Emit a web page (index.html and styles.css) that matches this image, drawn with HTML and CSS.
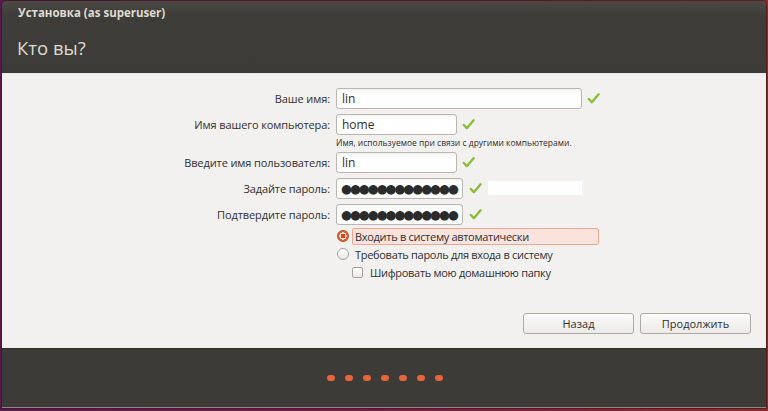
FILE: index.html
```html
<!DOCTYPE html>
<html lang="ru">
<head>
<meta charset="utf-8">
<title>Установка</title>
<link rel="stylesheet" href="styles.css">
</head>
<body>
<div class="window">
  <header class="header">
    <div class="wtitle">Установка (as superuser)</div>
    <h1 class="page-title">Кто вы?</h1>
  </header>
  <main class="content">
    <div class="form">
      <label class="lbl">Ваше имя:</label>
      <div class="field"><div class="input w-long">lin</div><span class="check"><svg viewBox="0 0 14 14" width="13" height="13"><path d="M2 7.5 L5.2 11 L12.5 2.5" fill="none" stroke="#8bbd3a" stroke-width="2.6" stroke-linecap="round" stroke-linejoin="round"/></svg></span></div>

      <label class="lbl">Имя вашего компьютера:</label>
      <div class="field"><div class="input w-short">home</div><span class="check"><svg viewBox="0 0 14 14" width="13" height="13"><path d="M2 7.5 L5.2 11 L12.5 2.5" fill="none" stroke="#8bbd3a" stroke-width="2.6" stroke-linecap="round" stroke-linejoin="round"/></svg></span></div>
      <div></div>
      <div class="hint">Имя, используемое при связи с другими компьютерами.</div>

      <label class="lbl">Введите имя пользователя:</label>
      <div class="field"><div class="input w-short">lin</div><span class="check"><svg viewBox="0 0 14 14" width="13" height="13"><path d="M2 7.5 L5.2 11 L12.5 2.5" fill="none" stroke="#8bbd3a" stroke-width="2.6" stroke-linecap="round" stroke-linejoin="round"/></svg></span></div>

      <label class="lbl">Задайте пароль:</label>
      <div class="field"><div class="input w-pass dots">●●●●●●●●●●●●●</div><span class="check"><svg viewBox="0 0 14 14" width="13" height="13"><path d="M2 7.5 L5.2 11 L12.5 2.5" fill="none" stroke="#8bbd3a" stroke-width="2.6" stroke-linecap="round" stroke-linejoin="round"/></svg></span><span class="strength"></span></div>

      <label class="lbl">Подтвердите пароль:</label>
      <div class="field"><div class="input w-pass dots">●●●●●●●●●●●●●</div><span class="check"><svg viewBox="0 0 14 14" width="13" height="13"><path d="M2 7.5 L5.2 11 L12.5 2.5" fill="none" stroke="#8bbd3a" stroke-width="2.6" stroke-linecap="round" stroke-linejoin="round"/></svg></span></div>

      <div></div>
      <div class="options">
        <div class="opt"><span class="radio on"></span><span class="opt-text focus">Входить в систему автоматически</span></div>
        <div class="opt"><span class="radio"></span><span class="opt-text">Требовать пароль для входа в систему</span></div>
        <div class="opt sub"><span class="box"></span><span class="opt-text">Шифровать мою домашнюю папку</span></div>
      </div>
    </div>
    <div class="buttons">
      <button class="btn">Назад</button>
      <button class="btn">Продолжить</button>
    </div>
  </main>
  <footer class="footer">
    <div class="steps">
      <span class="dot"></span><span class="dot"></span><span class="dot"></span><span class="dot"></span><span class="dot"></span><span class="dot"></span><span class="dot"></span>
    </div>
  </footer>
</div>
</body>
</html>
```
FILE: styles.css
```css
* { box-sizing: border-box; }
html, body { height: 100%; }
body {
  margin: 0;
  background: linear-gradient(90deg, #5a1a4c 0%, #6e1f45 50%, #8a2a2a 100%);
  font-family: "Open Sans", "DejaVu Sans", sans-serif;
  overflow: hidden;
}
.window {
  margin: 1px 2px 0 2px;
  height: 407px;
  display: flex;
  flex-direction: column;
  border-radius: 4px 4px 0 0;
  overflow: hidden;
  box-shadow: 0 0 0 1px rgba(60,20,20,0.6);
}
.header {
  height: 72px;
  flex: none;
  background: linear-gradient(#4a4944 0px, #3e3d39 14px, #3c3b37 100%);
  padding: 4px 0 0 16px;
}
.wtitle {
  color: #dfdbd2;
  font-size: 11.5px;
  font-weight: bold;
  height: 16px;
  line-height: 16px;
}
.page-title {
  margin: 15px 0 0 -1px;
  color: #dfdbd2;
  font-weight: normal;
  font-size: 18.5px;
  line-height: 24px;
}
.content {
  flex: 1;
  background: #f2f1f0;
  border-top: 1px solid #e8e6e3;
  display: flex;
  flex-direction: column;
  padding-top: 11px;
}
.form {
  display: grid;
  grid-template-columns: 328px auto;
  column-gap: 6px;
  align-items: center;
}
.lbl {
  text-align: right;
  font-size: 11px;
  letter-spacing: -0.1px;
  color: #2f2f2f;
  white-space: nowrap;
}
.field {
  display: flex;
  align-items: center;
  height: 26px;
}
.input {
  height: 21px;
  border: 1px solid #b9b6b1;
  border-radius: 3px;
  background: linear-gradient(#f4f4f4, #ffffff 5px);
  font-size: 12px;
  color: #2f2f2f;
  padding: 0 5px;
  line-height: 19px;
  overflow: hidden;
  white-space: nowrap;
}
.w-long { width: 246px; }
.w-short { width: 121px; }
.w-pass { width: 127px; }
.dots {
  font-size: 12.5px;
  letter-spacing: -2px;
  color: #2b2b2b;
  padding-left: 4px;
}
.check {
  display: inline-flex;
  margin-left: 5px;
  width: 13px;
  height: 13px;
}
.w-pass + .check { margin-left: 6px; }
.strength {
  margin-left: 6px;
  width: 94px;
  height: 14px;
  background: #ffffff;
}
.hint {
  font-size: 8.5px;
  color: #2f2f2f;
  height: 12px;
  line-height: 12px;
}
.options {
  margin-left: 1px;
}
.opt {
  display: flex;
  align-items: center;
  height: 18px;
  font-size: 11px;
  letter-spacing: -0.3px;
  color: #2f2f2f;
}
.opt.sub { padding-left: 15px; }
.radio {
  width: 12px;
  height: 12px;
  border-radius: 50%;
  border: 1px solid #a7a49f;
  background: linear-gradient(#fefefe, #e9e8e6);
  margin-right: 4px;
  flex: none;
}
.radio.on {
  border-color: #c0461c;
  background: radial-gradient(circle, #d8471a 0 2.2px, #ffffff 2.6px 3.4px, #e8602f 3.8px);
}
.box {
  width: 11px;
  height: 11px;
  border: 1px solid #a7a49f;
  border-radius: 2px;
  background: linear-gradient(#fefefe, #ecebe9);
  margin-right: 5px;
  flex: none;
}
.opt-text { padding: 0 2px; line-height: 15px; }
.opt-text.focus {
  background: #fae3dc;
  border: 1px solid #eca892;
  border-radius: 2px;
  width: 247px;
  margin-left: -1px;
}
.buttons {
  margin-top: auto;
  display: flex;
  justify-content: flex-end;
  gap: 6px;
  padding: 0 15px 14px 0;
}
.btn {
  width: 111px;
  height: 21px;
  border: 1px solid #aeaba5;
  border-radius: 3px;
  background: linear-gradient(#fbfbfa, #eceae7);
  font-family: "Open Sans", "DejaVu Sans", sans-serif;
  font-size: 11px;
  color: #2f2f2f;
  padding: 0;
}
.footer {
  height: 60px;
  flex: none;
  background: #3c3b37;
  border-top: 1px solid #2f2e2b;
  border-bottom: 1px solid #8a8784;
  display: flex;
  align-items: center;
  justify-content: center;
}
.steps {
  display: flex;
  gap: 10px;
  margin-left: 2px;
}
.dot {
  width: 8px;
  height: 6px;
  border-radius: 3px;
  background: #e8643a;
}
```
